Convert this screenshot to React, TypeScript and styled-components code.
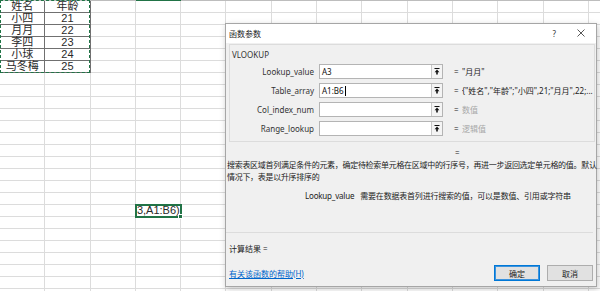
import styled, { createGlobalStyle } from 'styled-components'

const GlobalStyle = createGlobalStyle`
  html, body {
    margin: 0;
    padding: 0;
    background: #ffffff;
    overflow: hidden;
  }
`

const COLS = 14
const ROWS = 25

const tableData = [
  ['姓名', '年龄'],
  ['小四', '21'],
  ['月月', '22'],
  ['李四', '23'],
  ['小球', '24'],
  ['马冬梅', '25'],
]

const Page = styled.div`
  position: relative;
  width: 600px;
  height: 291px;
  overflow: hidden;
  background: #ffffff;
`

const HeaderStrip = styled.div`
  display: grid;
  grid-template-columns: repeat(${COLS}, 45.3px);
  height: 1px;
  background: #bdbdbd;
`

const HeaderCell = styled.div<{ $selected?: boolean }>`
  background: ${({ $selected }) => ($selected ? '#217346' : 'transparent')};
`

const SheetGrid = styled.div`
  display: grid;
  grid-template-columns: repeat(${COLS}, 45.3px);
  grid-auto-rows: 12px;
  font-family: 'Liberation Sans', 'Noto Sans CJK SC', sans-serif;
  font-size: 11px;
  color: #2a2a2a;
`

const Cell = styled.div<{ $table?: boolean; $active?: boolean }>`
  position: relative;
  box-sizing: border-box;
  border-right: 1px solid ${({ $table }) => ($table ? '#707070' : '#dcdcdc')};
  border-bottom: 1px solid ${({ $table }) => ($table ? '#707070' : '#dcdcdc')};
  line-height: 11px;
  white-space: nowrap;
  text-align: ${({ $table }) => ($table ? 'center' : 'left')};
  padding-left: ${({ $active }) => ($active ? '1px' : '0')};
  z-index: ${({ $active }) => ($active ? 2 : 0)};
  outline: ${({ $active }) => ($active ? '2px solid #217346' : 'none')};
  outline-offset: -1px;

  &::after {
    content: '';
    display: ${({ $active }) => ($active ? 'block' : 'none')};
    position: absolute;
    right: -3px;
    bottom: -3px;
    width: 3px;
    height: 3px;
    background: #217346;
    border: 1px solid #ffffff;
  }
`

const Marquee = styled.div`
  position: absolute;
  left: 0;
  top: 0;
  width: 90px;
  height: 73px;
  box-sizing: border-box;
  border: 1px dashed #217346;
  pointer-events: none;
`

const Dialog = styled.div`
  position: absolute;
  left: 225px;
  top: 23px;
  width: 372px;
  height: 264px;
  box-sizing: border-box;
  display: flex;
  flex-direction: column;
  background: #f0f0f0;
  border: 1px solid #a6a6a6;
  box-shadow: 1px 2px 6px rgba(0, 0, 0, 0.22);
  font-family: 'Noto Sans', 'Noto Sans CJK SC', sans-serif;
  font-size: 8px;
  color: #222222;
  z-index: 5;
`

const TitleBar = styled.div`
  height: 18px;
  display: flex;
  align-items: center;
  padding: 0 0 1px 3px;
  background: #ffffff;
`

const Title = styled.div`
  flex: 1;
`

const TitleButtons = styled.div`
  display: flex;
  align-items: center;
  gap: 21px;
  padding-right: 11px;
`

const HelpMark = styled.span`
  font-size: 8px;
  color: #333333;
`

const GroupBox = styled.div`
  margin: 1px 1px 0 3px;
  height: 98px;
  box-sizing: border-box;
  border: 1px solid #dcdcdc;
  padding: 4px 0 0 2px;
`

const FuncName = styled.div`
  line-height: 11px;
  height: 15px;
  color: #333333;
`

const ArgGrid = styled.div`
  display: grid;
  grid-template-columns: 87px 124px 19px 1fr;
  grid-auto-rows: 15px;
  row-gap: 4px;
  align-items: center;
`

const ArgLabel = styled.div`
  text-align: right;
  padding-right: 5px;
  color: #333333;
`

const InputWrap = styled.div`
  display: flex;
  height: 15px;
  box-sizing: border-box;
  border: 1px solid #b4b4b4;
  background: #ffffff;
`

const InputText = styled.div`
  flex: 1;
  display: flex;
  align-items: center;
  padding-left: 2px;
  color: #111111;
`

const Caret = styled.span`
  display: inline-block;
  width: 1px;
  height: 10px;
  margin-left: 1px;
  background: #000000;
`

const RefButton = styled.div`
  width: 10px;
  display: flex;
  align-items: center;
  justify-content: center;
  border-left: 1px solid #c8c8c8;
  background: #f4f4f4;
`

const Eq = styled.div`
  padding-left: 11px;
`

const ArgResult = styled.div<{ $muted?: boolean }>`
  white-space: nowrap;
  overflow: hidden;
  color: ${({ $muted }) => ($muted ? '#a8a8a8' : '#222222')};
`

const TotalEq = styled.div`
  margin-top: 5px;
  padding-left: 229px;
  line-height: 12px;
`

const Description = styled.div`
  padding-left: 1px;
  line-height: 12px;
  white-space: nowrap;
  letter-spacing: -0.3px;
`

const ArgHelp = styled.div`
  display: flex;
  gap: 6px;
  margin-top: 7px;
  padding-left: 79px;
  line-height: 12px;
  white-space: nowrap;
  letter-spacing: -0.2px;
`

const Separator = styled.div`
  margin: 30px 3px 0 0;
  height: 1px;
  background: #dcdcdc;
`

const ResultLine = styled.div`
  margin-top: 10px;
  padding-left: 3px;
  line-height: 12px;
`

const Footer = styled.div`
  display: flex;
  align-items: center;
  margin-top: 10px;
  padding: 0 3px;
`

const HelpLink = styled.a`
  flex: 1;
  color: #0066cc;
  text-decoration: underline;
`

const Button = styled.div<{ $primary?: boolean }>`
  width: 46px;
  height: 16px;
  box-sizing: border-box;
  display: flex;
  align-items: center;
  justify-content: center;
  margin-left: 7px;
  background: #e1e1e1;
  border: 1px solid ${({ $primary }) => ($primary ? '#0078d7' : '#adadad')};
  box-shadow: ${({ $primary }) => ($primary ? 'inset 0 0 0 1px #3c93dd' : 'none')};
  color: #222222;
`

function RefIcon() {
  return (
    <svg width="6" height="7" viewBox="0 0 6 7">
      <rect x="0.5" y="0" width="5" height="1" fill="#111" />
      <path d="M3 1.6 L5.4 4.2 L3.8 4.2 L3.8 6.6 L2.2 6.6 L2.2 4.2 L0.6 4.2 Z" fill="#111" />
    </svg>
  )
}

function CloseIcon() {
  return (
    <svg width="8" height="8" viewBox="0 0 8 8">
      <path d="M0.5 0.5 L7.5 7.5 M7.5 0.5 L0.5 7.5" stroke="#444" strokeWidth="0.9" />
    </svg>
  )
}

const args = [
  { name: 'Lookup_value', value: 'A3', result: '"月月"' },
  { name: 'Table_array', value: 'A1:B6', caret: true, result: '{"姓名","年龄";"小四",21;"月月",22;...' },
  { name: 'Col_index_num', value: '', result: '数值', muted: true },
  { name: 'Range_lookup', value: '', result: '逻辑值', muted: true },
]

export default function App() {
  const cells = []
  for (let r = 0; r < ROWS; r++) {
    for (let c = 0; c < COLS; c++) {
      const inTable = r < tableData.length && c < 2
      const active = r === 17 && c === 3
      cells.push(
        <Cell key={`${r}-${c}`} $table={inTable} $active={active}>
          {inTable ? tableData[r][c] : active ? '3,A1:B6)' : null}
        </Cell>
      )
    }
  }

  return (
    <Page>
      <GlobalStyle />
      <HeaderStrip>
        {Array.from({ length: COLS }).map((_, i) => (
          <HeaderCell key={i} $selected={i === 3} />
        ))}
      </HeaderStrip>
      <SheetGrid>{cells}</SheetGrid>
      <Marquee />

      <Dialog>
        <TitleBar>
          <Title>函数参数</Title>
          <TitleButtons>
            <HelpMark>?</HelpMark>
            <CloseIcon />
          </TitleButtons>
        </TitleBar>

        <GroupBox>
          <FuncName>VLOOKUP</FuncName>
          <ArgGrid>
            {args.map((a) => [
              <ArgLabel key={a.name + 'l'}>{a.name}</ArgLabel>,
              <InputWrap key={a.name + 'i'}>
                <InputText>
                  {a.value}
                  {a.caret && <Caret />}
                </InputText>
                <RefButton>
                  <RefIcon />
                </RefButton>
              </InputWrap>,
              <Eq key={a.name + 'e'}>=</Eq>,
              <ArgResult key={a.name + 'r'} $muted={a.muted}>
                {a.result}
              </ArgResult>,
            ])}
          </ArgGrid>
        </GroupBox>

        <TotalEq>=</TotalEq>
        <Description>
          搜索表区域首列满足条件的元素，确定待检索单元格在区域中的行序号，再进一步返回选定单元格的值。默认
          <br />
          情况下，表是以升序排序的
        </Description>
        <ArgHelp>
          <span>Lookup_value</span>
          <span>需要在数据表首列进行搜索的值，可以是数值、引用或字符串</span>
        </ArgHelp>

        <Separator />
        <ResultLine>计算结果 =</ResultLine>
        <Footer>
          <HelpLink>有关该函数的帮助(H)</HelpLink>
          <Button $primary>确定</Button>
          <Button>取消</Button>
        </Footer>
      </Dialog>
    </Page>
  )
}
